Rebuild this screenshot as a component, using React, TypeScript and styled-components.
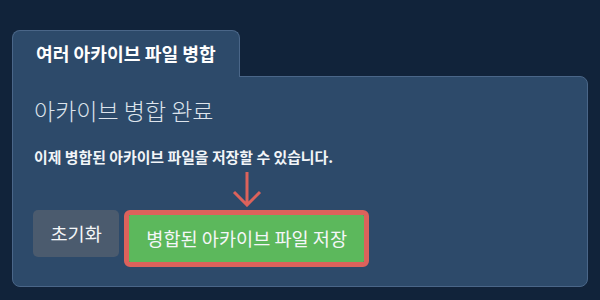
import styled, { createGlobalStyle } from 'styled-components';

const GlobalStyle = createGlobalStyle`
  html, body {
    margin: 0;
    padding: 0;
    background: #11233a;
  }
  body {
    font-family: "Noto Sans CJK KR", "Noto Sans", sans-serif;
  }
`;

const Page = styled.div`
  width: 600px;
  height: 300px;
  box-sizing: border-box;
  padding: 30px 12px 0 12px;
  background: #11233a;
`;

const Tab = styled.div`
  display: inline-flex;
  align-items: center;
  box-sizing: border-box;
  height: 47px;
  padding: 0 23px 2px 23px;
  margin-bottom: -1px;
  position: relative;
  z-index: 1;
  background: #2d4a6a;
  border: 1px solid #4a6688;
  border-bottom: none;
  border-radius: 8px 8px 0 0;
  color: #ffffff;
  font-size: 18.2px;
  font-weight: 700;
  line-height: 1;
`;

const Panel = styled.div`
  box-sizing: border-box;
  height: 211px;
  padding: 19px 20px 0 20px;
  background: #2d4a6a;
  border: 1px solid #4a6688;
  border-radius: 0 8px 8px 8px;
`;

const Heading = styled.h2`
  margin: 0 0 0 1px;
  font-size: 23px;
  font-weight: 300;
  line-height: 29px;
  color: #dde4ec;
`;

const Description = styled.p`
  margin: 22px 0 0 1px;
  font-size: 14.9px;
  font-weight: 700;
  line-height: 20px;
  color: #f2f5f8;
`;

const Actions = styled.div`
  display: flex;
  align-items: flex-start;
  gap: 5px;
  margin-top: 43px;
`;

const Button = styled.button<{ $variant: 'reset' | 'save' }>`
  box-sizing: border-box;
  height: 47px;
  padding: 0 ${({ $variant }) => ($variant === 'reset' ? '17.5px' : '17px')};
  border: none;
  border-radius: ${({ $variant }) => ($variant === 'reset' ? '5px' : '1px')};
  background: ${({ $variant }) => ($variant === 'reset' ? '#4b5b6e' : '#5cb85c')};
  color: #f4f6f8;
  font-family: "Noto Sans CJK KR", "Noto Sans", sans-serif;
  font-size: 18.6px;
  font-weight: 400;
  line-height: 1;
  cursor: pointer;
`;

const Highlight = styled.div`
  position: relative;
  border: 5px solid #dc625b;
  border-radius: 6px;
  display: flex;
`;

const Arrow = styled.svg`
  position: absolute;
  left: 50%;
  top: -44px;
  transform: translateX(-50%);
`;

export default function App() {
  return (
    <>
      <GlobalStyle />
      <Page>
        <Tab>여러 아카이브 파일 병합</Tab>
        <Panel>
          <Heading>아카이브 병합 완료</Heading>
          <Description>이제 병합된 아카이브 파일을 저장할 수 있습니다.</Description>
          <Actions>
            <Button $variant="reset">초기화</Button>
            <Highlight>
              <Arrow width="30" height="36" viewBox="0 0 30 36">
                <path
                  d="M15 1 V34 M2 21 L15 34 L28 21"
                  fill="none"
                  stroke="#dc625b"
                  strokeWidth="3"
                />
              </Arrow>
              <Button $variant="save">병합된 아카이브 파일 저장</Button>
            </Highlight>
          </Actions>
        </Panel>
      </Page>
    </>
  );
}
